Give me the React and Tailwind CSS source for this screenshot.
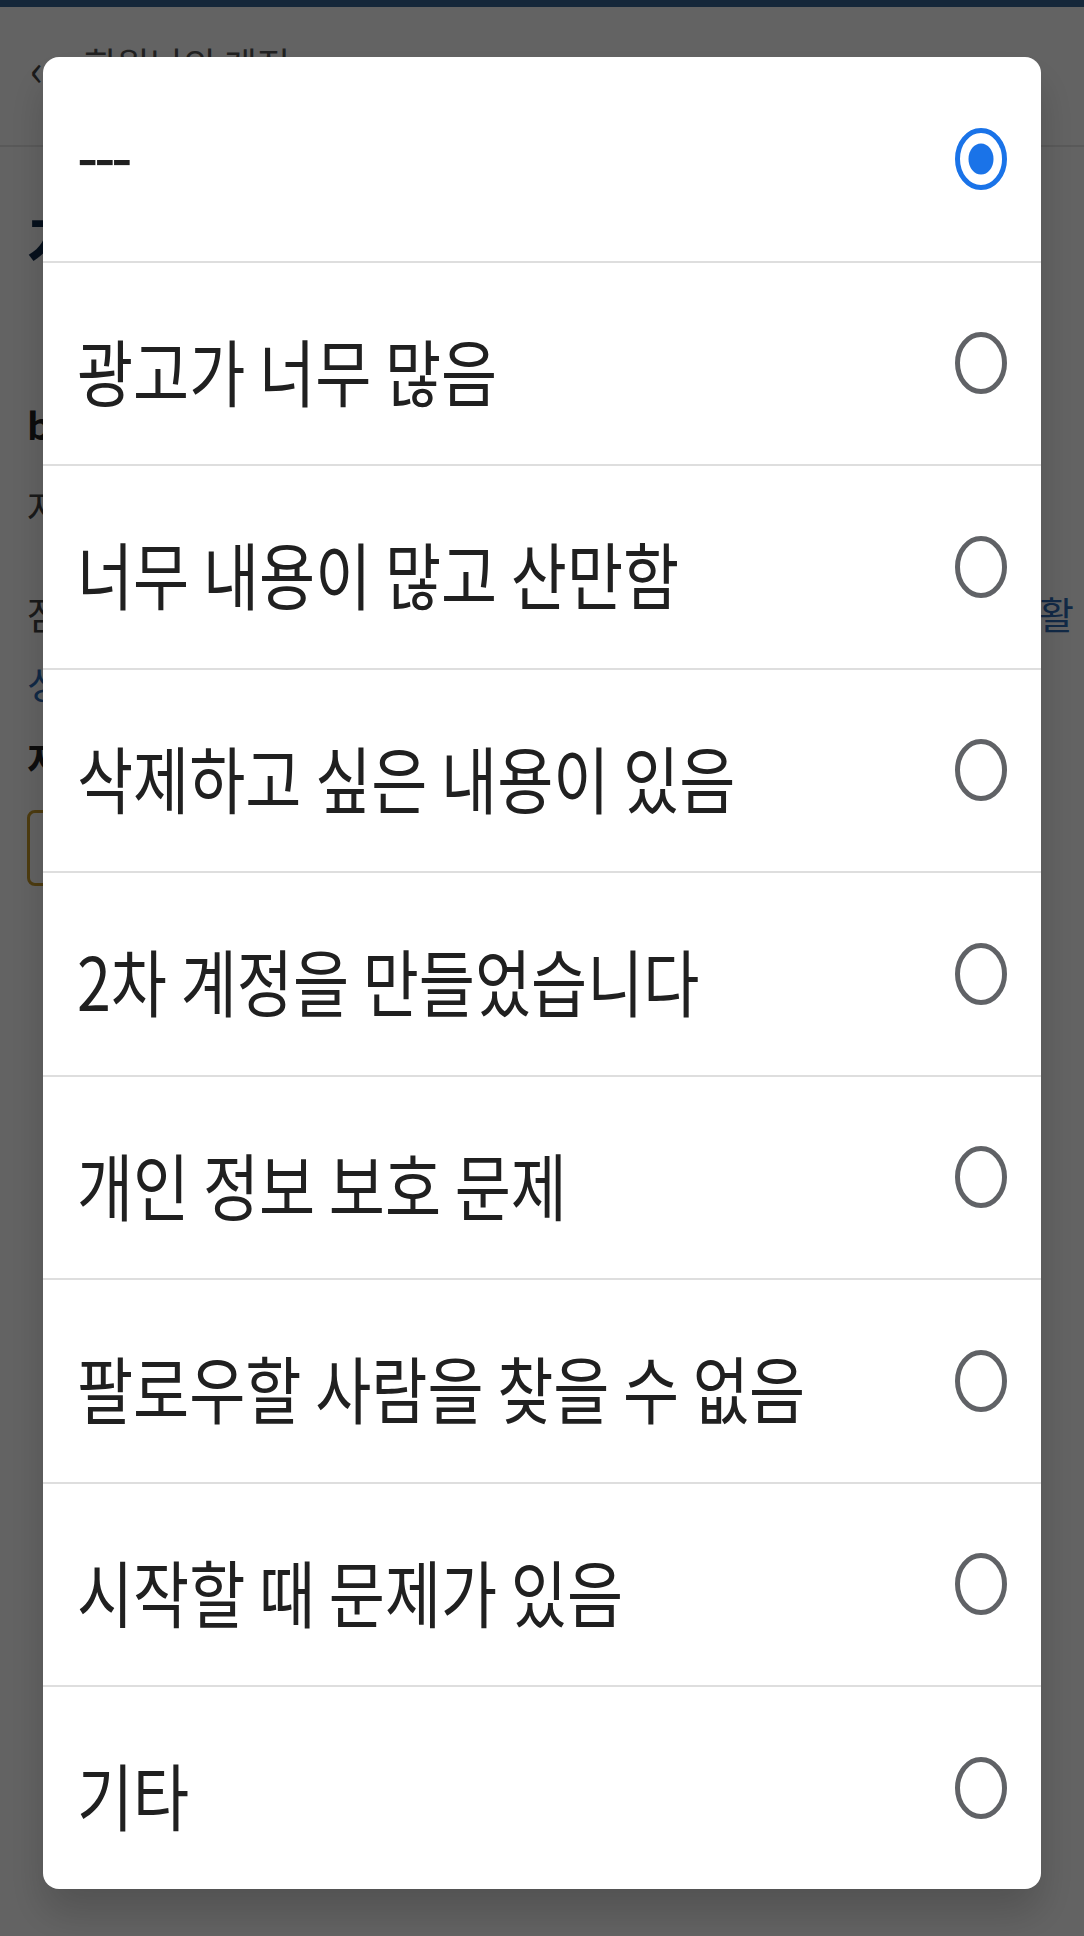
import React, { useState } from 'react';

const options = [
  '---',
  '광고가 너무 많음',
  '너무 내용이 많고 산만함',
  '삭제하고 싶은 내용이 있음',
  '2차 계정을 만들었습니다',
  '개인 정보 보호 문제',
  '팔로우할 사람을 찾을 수 없음',
  '시작할 때 문제가 있음',
  '기타',
];

const Radio = ({ checked }) => (
  <svg width="52" height="62" viewBox="0 0 52 62" className="shrink-0">
    <ellipse
      cx="26"
      cy="31"
      rx="23.5"
      ry="28.5"
      fill="none"
      stroke={checked ? '#1a73e8' : '#606266'}
      strokeWidth="5"
    />
    {checked && <ellipse cx="26" cy="31" rx="12.5" ry="15.5" fill="#1a73e8" />}
  </svg>
);

const App = () => {
  const [selected, setSelected] = useState(0);

  return (
    <div className="relative min-h-[1936px] bg-white font-['Noto_Sans_CJK_KR','Noto_Sans',sans-serif] text-[#222]">
      {/* Page behind the dialog */}
      <div className="h-[7px] bg-[#3d6792]" />
      <div className="h-[140px] border-b-2 border-[#e6e6e6] flex items-start pl-[30px] pt-[38px] gap-[40px]">
        <span className="text-[44px] leading-none text-[#444]">‹</span>
        <span className="text-[36px] leading-none text-[#555]">회원님의 계정</span>
      </div>
      <div className="pl-[27px] pr-[10px]">
        <h1 className="mt-[56px] text-[64px] leading-[72px] font-bold text-[#0f2a4a]">계정 삭제</h1>
        <p className="mt-[125px] text-[38px] font-bold leading-[48px]">bluesky.user</p>
        <p className="mt-[34px] text-[38px] leading-[48px] text-[#444]">자신의 계정과 게시물을 삭제합니다.</p>
        <div className="mt-[48px] text-[38px] leading-[70px] text-[#444]">
          <div className="flex justify-between">
            <span>잠시 쉬고 싶으시다면 계정을 삭제하는 대신</span>
            <span className="text-[#2d6bb5]">활</span>
          </div>
          <div className="text-[#2d6bb5]">성화할 수 있습니다.</div>
        </div>
        <p className="mt-[16px] text-[38px] font-bold leading-[48px]">저장하기 전에 확인해 주세요</p>
        <div className="mt-[28px] h-[76px] w-[900px] rounded-[8px] border-[3px] border-[#c79a2a]" />
      </div>

      {/* Dialog */}
      <div className="fixed inset-0 bg-black/[0.61] flex flex-col">
        <div className="h-[7px] bg-[#15273a]" />
        <div className="mx-[43px] mt-[50px] bg-white rounded-2xl overflow-hidden shadow-[0_24px_40px_rgba(0,0,0,0.18)]">
          {options.map((label, i) => (
            <button
              key={label}
              type="button"
              onClick={() => setSelected(i)}
              className={`w-full h-[203.5px] flex items-center justify-between pl-[34px] pr-[34px] text-left ${
                i > 0 ? 'border-t-2 border-[#dedede]' : ''
              }`}
            >
              <span
                className={`inline-block text-[61px] leading-none text-[#202020] scale-y-[1.2] ${
                  i === 0 ? 'pb-[12px] tracking-[-4px]' : 'pt-[10px]'
                }`}
              >
                {label}
              </span>
              <Radio checked={selected === i} />
            </button>
          ))}
        </div>
      </div>
    </div>
  );
};

export default App;
